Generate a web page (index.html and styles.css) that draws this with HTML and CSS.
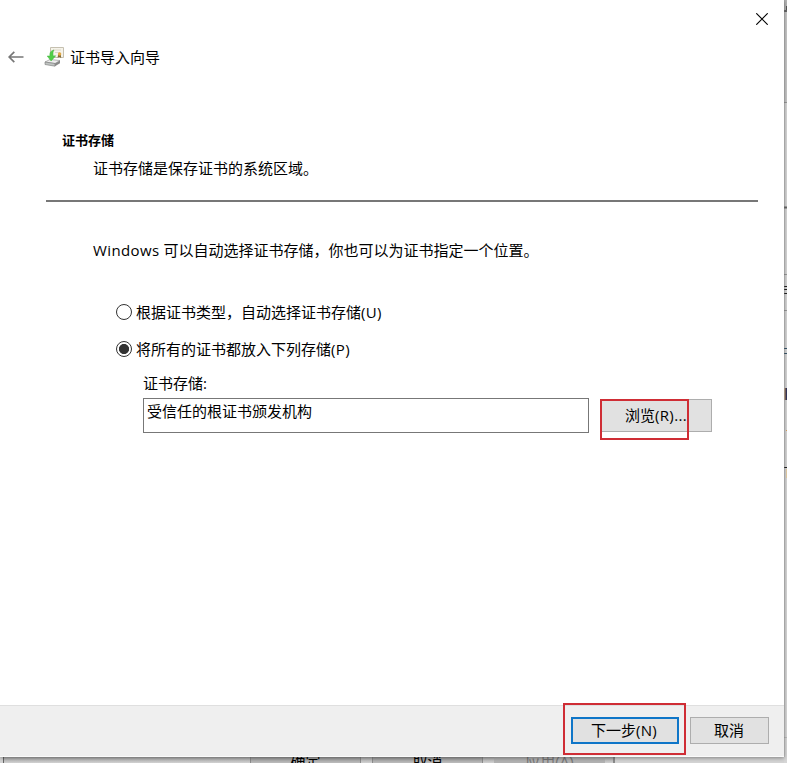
FILE: index.html
```html
<!DOCTYPE html>
<html lang="zh-CN">
<head>
<meta charset="utf-8">
<title>证书导入向导</title>
<link rel="stylesheet" href="styles.css">
</head>
<body>
<div class="desktop">
  <div class="behind">
    <div class="behind-btn">确定</div>
    <div class="behind-btn">取消</div>
    <div class="behind-btn disabled">应用(A)</div>
  </div>
  <svg class="edge" width="3" height="763" viewBox="0 0 3 763">
    <rect width="3" height="763" fill="#d6d6d6"/>
    <rect width="3" height="11" fill="#b5b5b5"/>
    <rect y="12" width="3" height="90" fill="#c6c6c6"/>
    <rect x="2" y="6" width="1" height="5" fill="#555"/>
    <path d="M0 11h3M0 207.500h3" stroke="#666" stroke-width="2"/>
    <path d="M0 102.500h3M0 274.500h3M0 310.500h3" stroke="#999"/>
    <path d="M0 286.500h3M0 289.500h3M0 293.500h3M0 467.500h3" stroke="#222"/>
    <path d="M0 348.500h3M0 353.500h3" stroke="#38566a"/>
    <rect x="1" y="388" width="2" height="12" fill="#34375c"/>
    <path d="M1 388v12" stroke="#c49363"/>
    <path d="M2 430.500h1" stroke="#d8a062"/>
    <rect x="2" y="469" width="1" height="9" fill="#e5cda5"/>
    <path d="M0 737.500h3" stroke="#bbb"/>
    <rect width="1" height="757" fill="#999" opacity=".28"/>
  </svg>
  <main class="dialog">
    <svg class="close" width="12" height="12" viewBox="0 0 12 12"><path d="M.3.3 11.700 11.700M11.700.3.3 11.700" stroke="#000" stroke-width="1.150"/></svg>
    <header class="title">
      <svg class="back" width="16" height="12" viewBox="0 0 16 12" fill="none" stroke="#777" stroke-width="1.700"><path d="M15.500 6H1M6.300.8 1.100 6l5.200 5.200"/></svg>
      <svg class="cert" width="21" height="21" viewBox="0 0 21 21">
        <path d="M6.500 1.500h13v10h-13z" fill="#f6f3ea" stroke="#c5c0b0"/>
        <path d="M9 4h8M11 6.500h5" stroke="#dcd8c9"/>
        <path d="m14.200 8-.6 3.800 1.700-.8 1.900.9L16.800 8z" fill="#826b38"/>
        <circle cx="15.600" cy="8" r="1.700" fill="#e0a844"/>
        <path d="m1 16 5-2.500 10 1-5 3z" fill="#eee" stroke="#999" stroke-width=".7"/>
        <path d="m1 16 10 1.500v2.700L1 18.500z" fill="#c0c4c2" stroke="#777" stroke-width=".6"/>
        <path d="m11 17.500 5-3v2.700l-5 3z" fill="#888"/>
        <path d="M10 4C6.800 4.500 5.500 6.500 5.900 10H3.200l3.900 5 4.600-5.200-2.500.1C8.700 7.500 9 5.500 10 4z" fill="#50ce46" stroke="#43b33e" stroke-width=".5"/>
      </svg>
      <span>证书导入向导</span>
    </header>
    <section class="intro">
      <h1>证书存储</h1>
      <p>证书存储是保存证书的系统区域。</p>
    </section>
    <section class="content">
      <p><span class="product">Windows</span> 可以自动选择证书存储，你也可以为证书指定一个位置。</p>
      <div class="choice first"><i class="radio"></i><span>根据证书类型，自动选择证书存储<span class="key">(U)</span></span></div>
      <div class="choice"><i class="radio checked"></i><span>将所有的证书都放入下列存储<span class="key">(P)</span></span></div>
      <div class="label">证书存储:</div>
      <div class="store">
        <div class="field">受信任的根证书颁发机构</div>
        <div class="btn browse"><span>浏览<span class="key">(R)...</span></span><i class="mark mark-browse"></i></div>
      </div>
    </section>
    <footer class="footer">
      <div class="btn next"><span>下一步<span class="key">(N)</span></span><i class="mark mark-next"></i></div>
      <div class="btn cancel">取消</div>
    </footer>
  </main>
</div>
</body>
</html>
```
FILE: styles.css
```css
* { box-sizing: border-box; }
body { margin: 0; overflow: hidden; }
.desktop {
  position: relative;
  width: 787px;
  height: 763px;
  overflow: hidden;
  background: #d4d4d4;
  font: 15px/20px "Open Sans", "Noto Sans CJK SC", sans-serif;
  color: #000;
  white-space: nowrap;
}
.edge { position: absolute; top: 0; right: 0; }
.behind {
  position: absolute;
  left: 3px;
  top: 740px;
  width: 612px;
  height: 40px;
  padding: 8px 8px 0 0;
  display: flex;
  justify-content: flex-end;
  gap: 11px;
  border-left: 1px solid #666;
  border-right: 2px solid #8a8a8a;
  background: linear-gradient(#aaa 17px, #d2d2d2 23px);
}
.behind-btn {
  width: 111px;
  height: 34px;
  padding-top: 2px;
  border: 1px solid #8c8c8c;
  background: linear-gradient(#999 8px, #c3c3c3 15px);
  text-align: center;
}
.behind-btn.disabled { background: #b2b2b2; border-color: #b2b2b2; color: #777; }
.dialog {
  position: relative;
  display: flex;
  flex-direction: column;
  width: 784px;
  height: 757px;
  background: #fff;
  box-shadow: 0 1px 4px #0006;
}
.close { position: absolute; top: 13px; right: 16px; }
.title {
  display: flex;
  align-items: center;
  height: 22px;
  margin: 46px 0 0 8px;
}
.cert { margin: 0 5px 1px 20px; }
.intro {
  width: 712px;
  height: 72px;
  margin: 62px 0 0 46px;
  padding: 0 16px;
  border-bottom: 2px solid #777;
}
.intro h1 { margin: 0; font-size: 13px; line-height: 20px; font-weight: 700; }
.intro p { margin: 8px 0 0 31px; }
.content { padding: 38px 0 0 93px; flex: 1; }
.content p { margin: 0; }
.product { letter-spacing: .4px; }
.key { letter-spacing: .35px; }
.choice { display: flex; align-items: center; height: 20px; margin: 17px 0 0 23px; }
.choice.first { margin-top: 42px; }
.radio {
  width: 16px;
  height: 16px;
  margin-right: 4px;
  border: 1px solid #333;
  border-radius: 50%;
}
.radio.checked { background: radial-gradient(circle, #333 4.700px, #fff 5.400px); }
.label { margin: 14px 0 0 50px; }
.store { display: flex; margin: 5px 0 0 50px; gap: 11px; align-items: center; }
.field { width: 446px; height: 35px; padding: 2px 3px; border: 1px solid #777; }
.btn {
  position: relative;
  display: flex;
  align-items: center;
  justify-content: center;
  border: 1px solid #adadad;
  background: #e1e1e1;
}
.browse { width: 112px; height: 33px; padding-bottom: 2px; }
.mark { position: absolute; border: 2px solid #cf2d35; }
.mark-browse { left: -1px; top: -1px; width: 89px; height: 41px; }
.footer {
  display: flex;
  align-items: center;
  justify-content: flex-end;
  gap: 11px;
  height: 52px;
  padding: 0 15px 2px 0;
  border-top: 1px solid #dfdfdf;
  border-bottom: 1px solid #fafafa;
  background: #efefef;
}
.next { width: 108px; height: 27px; padding-right: 2px; border: 2px solid #0f76c8; }
.cancel { width: 79px; height: 27px; padding-right: 1px; }
.mark-next { left: -10px; top: -16px; width: 123px; height: 52px; }
```
